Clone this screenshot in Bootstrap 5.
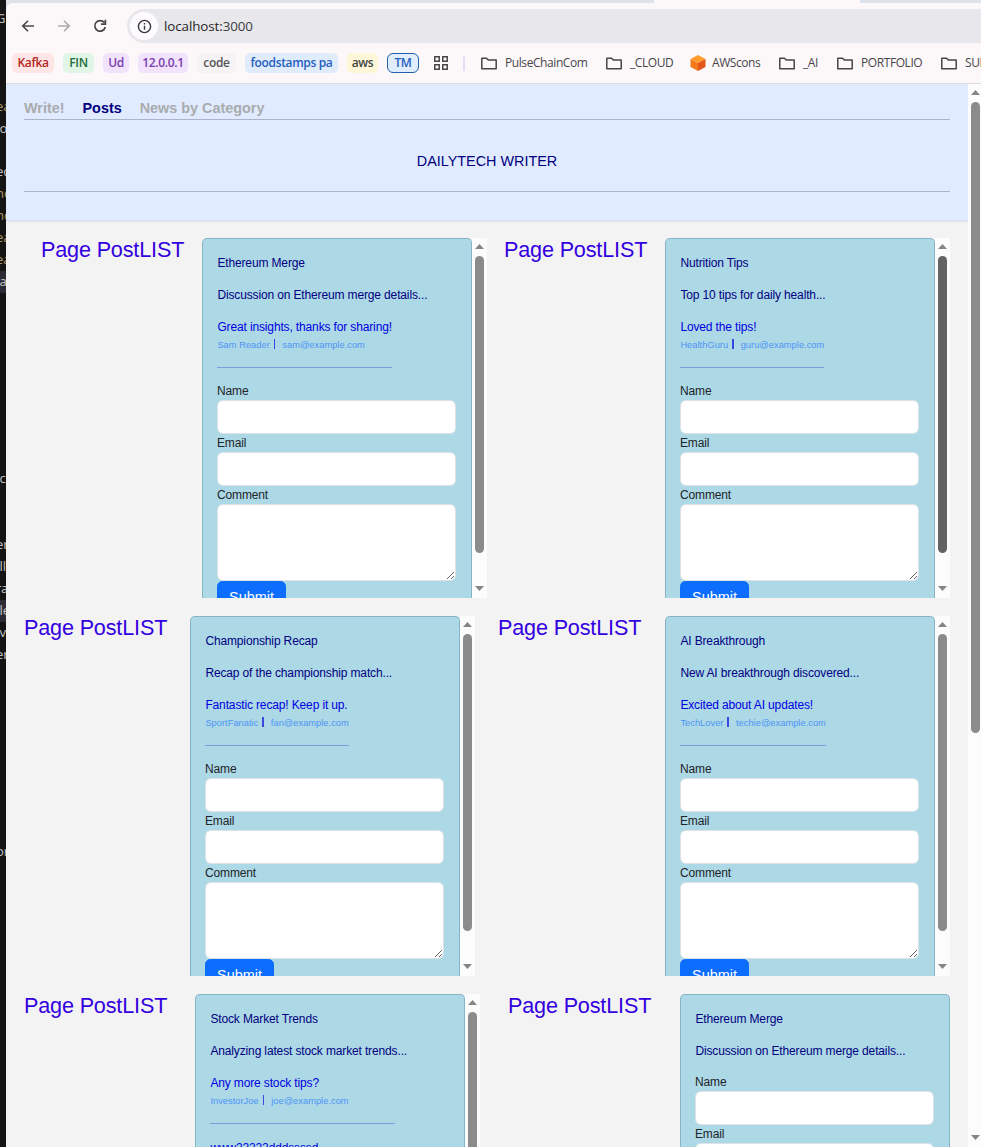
<!DOCTYPE html>
<html lang="en">
<head>
<meta charset="utf-8">
<title>DailyTech Writer</title>
<link href="https://cdn.jsdelivr.net/npm/bootstrap@5.3.0/dist/css/bootstrap.min.css" rel="stylesheet">
<style>
html{font-size:14.4px}
body{font-family:"Liberation Sans",Arial,sans-serif;height:1147px;width:981px;background:#141414}
.editor{width:6px;height:1147px;background:#141414;font:13px/21.93px "Noto Sans",sans-serif;color:#bdbdbd;padding-top:8px;white-space:nowrap}
.editor div{height:21.93px;overflow:hidden;text-indent:-4px}
.editor .gold{color:#a8935f}
.editor .hl{background:#2c2a35}
.editor .full{text-indent:-.5px}
.window{background:#dee2ea;width:975px}
.tabgap{height:3px;margin-left:648px;width:206px;background:#fcf8f9}
.chrome{height:81px;background:#fcf8f9;border-bottom:1px solid #dcdadf;border-top-left-radius:7px;font-family:"Open Sans","Noto Sans",sans-serif;color:#46464a}
.chrome svg{flex:none}
.toolbar{height:46px;padding-left:14px}
.toolbar>svg{margin-right:20px}
.address{height:34px;margin-left:-1px;border-radius:17px 0 0 17px;background:#e8e7ec;font-size:13.4px;color:#3c3c40;letter-spacing:-.1px}
.address b{font-weight:400;color:#1f1f22}
.info{width:28px;height:28px;margin-left:3px;margin-right:6px;background:#fdfbfd}
.marks{font-size:12px;height:28px;white-space:nowrap;padding-left:6px}
.chips{display:grid;grid-template-columns:42px 31px 26px 50px 39px 93px 31px 32px;column-gap:9px;flex:none}
.chip{height:20px;line-height:19px;border-radius:5px;text-align:center;font-weight:600;letter-spacing:-.35px}
.c-red{background:#fde6e5;color:#b3261e}.c-green{background:#e0f5e5;color:#1c6b3a}
.c-purple{background:#f1e3fb;color:#7a3cb0}.c-gray{background:#f5f3f5;color:#555}
.c-blue{background:#e0ebfb;color:#2560c0}.c-yellow{background:#fdf7d8;color:#444}
.c-line{background:#e0edfd;color:#2560c0;border:1px solid #2460a8;line-height:17px;border-radius:6px}
.apps{margin-left:15px}
.folders{display:grid;grid-template-columns:125px 84px 89px 58px 104px 60px;margin-left:16px;letter-spacing:-.42px;flex:none}
.folders svg{margin-right:8px}
.folders .cube{margin-right:6px}
.divide{width:2px;height:15px;background:#dfe0f2;margin-left:15px;flex:none}
.viewport{height:1063px;background:#f3f3f3}
.bar{background:#fcfcfc;padding:6px 3px;flex:none}
.bar .up,.bar .down{width:9px;height:5px;background:#858585;flex:none}
.up{clip-path:polygon(50% 0,100% 100%,0 100%)}
.down{clip-path:polygon(0 0,100% 0,50% 100%)}
.thumb{width:9px;border-radius:5px;background:#8b8b8b;margin-top:7px}
.side{width:15px;height:360px;padding-bottom:7px}
.side .thumb{height:297px}
.side.dark .thumb{background:#636363}
.side.long .thumb{height:315px}
.page-bar{width:13px;padding-left:3px;padding-right:1px;padding-bottom:7px}
.page-bar .thumb{height:631px}
.masthead{height:137px;background:#e0ebff;border-bottom:1px solid #d8e0ec;padding:15px 18px 0;box-shadow:0 1px 2px #0001}
.tabs{height:21px;border-bottom:1px solid #a9b4cb;line-height:18px;font-weight:700;color:#a9abae;gap:18px}
.tabs .now{color:#000080}
.brand{height:72px;border-bottom:1px solid #a9b4cb;line-height:83px;color:#000080}
.posts{padding:17px 0 0 18px}
.line{display:grid;height:360px;margin-bottom:18px}
.r1{padding-left:17px;grid-template-columns:161px 302px 161px 285px}
.r2{grid-template-columns:166px 308px 167px 285px}
.r3{grid-template-columns:171px 313px 172px 285px}
.heading{font-size:21.6px;line-height:24px;font-weight:400;color:#3300e0;margin:0;letter-spacing:-.16px;white-space:nowrap}
.post{width:270px;height:360px;background:#add8e6;border:1px solid #86b4c6;border-bottom:0;border-radius:5px 5px 0 0;padding:16px 14.4px 0;overflow:hidden;font-size:12px;letter-spacing:-.14px;flex:none}
.post p{margin:0 0 15px;line-height:17px;color:#000080}
.note{width:fit-content;border-bottom:1px solid #7a9fdc;height:49px;margin-bottom:16px;color:#0000e0;line-height:17px}
.note.wide{width:185px}
.by{font-size:9.3px;line-height:18px;height:18px;color:#4d94f5;white-space:nowrap;letter-spacing:.02px}
.by i{display:inline-block;width:1.5px;height:10px;background:#3c46e0;margin:0 7px 0 4px;vertical-align:-1px}
.post form{margin:-2px .4px 0 -.4px}
.post label{display:block;height:18px;line-height:19px;color:#212529}
.post .form-control{height:34px;border-radius:5.4px}
.post textarea.form-control{height:77px;min-height:0}
.post .btn{display:block;font-size:14.4px;height:34px;border-radius:5.4px;width:69px;padding-left:0;padding-right:0}
</style>
</head>
<body class="d-flex overflow-hidden">
<div class="editor overflow-hidden flex-shrink-0" id="editor"></div>
<div class="window flex-shrink-0">
  <div class="tabgap"></div>
  <div class="chrome overflow-hidden">
    <div class="toolbar d-flex align-items-center">
      <svg width="16" height="16" viewBox="0 0 16 16" fill="none" stroke="#47474a" stroke-width="1.6"><path d="M14 8H3M8 2.7 2.7 8 8 13.3"/></svg>
      <svg width="16" height="16" viewBox="0 0 16 16" fill="none" stroke="#aaa8ab" stroke-width="1.6"><path d="M2 8h11M8 2.7 13.3 8 8 13.3"/></svg>
      <svg width="16" height="16" viewBox="0 0 16 16" fill="none" stroke="#47474a" stroke-width="1.7"><path d="M12.3 4.600A5.300 5.300 0 1 0 13.300 9M13.400 1.800v4.300H9"/></svg>
      <div class="address d-flex align-items-center flex-grow-1">
        <span class="info rounded-circle d-flex align-items-center justify-content-center"><svg width="15" height="15" viewBox="0 0 15 15" fill="none" stroke="#36363a" stroke-width="1.4"><circle cx="7.5" cy="7.5" r="6.1"/><path d="M7.5 6.8v4M7.5 4v1.4"/></svg></span>
        <span><b>localhost:</b>3000</span>
      </div>
    </div>
    <div class="marks d-flex align-items-center">
      <div class="chips">
        <span class="chip c-red">Kafka</span><span class="chip c-green">FIN</span><span class="chip c-purple">Ud</span><span class="chip c-purple">12.0.0.1</span><span class="chip c-gray">code</span><span class="chip c-blue">foodstamps pa</span><span class="chip c-yellow">aws</span><span class="chip c-line">TM</span>
      </div>
      <svg class="apps" width="14" height="14" viewBox="0 0 14 14" fill="none" stroke="#454547" stroke-width="1.5"><path d="M.8.8h4.4v4.4H.8zM8.800.8h4.400v4.400H8.800zM.8 8.800h4.400v4.400H.8zM8.800 8.800h4.400v4.400H8.800z"/></svg>
      <span class="divide"></span>
      <div class="folders" id="folders"></div>
    </div>
  </div>
  <div class="viewport d-flex overflow-hidden">
    <main class="flex-grow-1">
      <header class="masthead">
        <nav class="tabs d-flex"><span>Write!</span><span class="now">Posts</span><span>News by Category</span></nav>
        <div class="brand text-center">DAILYTECH WRITER</div>
      </header>
      <section class="posts" id="posts"></section>
    </main>
    <div class="bar page-bar d-flex flex-column"><span class="up"></span><span class="thumb"></span><span class="down mt-auto"></span></div>
  </div>
</div>
<script src="https://cdn.jsdelivr.net/npm/bootstrap@5.3.0/dist/js/bootstrap.bundle.min.js"></script>
<script>
// visible slice of the code editor behind the browser window
const code = {0:['G'],4:['ea','gold'],5:['o','full'],7:['ed'],8:['nc','gold'],9:['nc','gold'],10:['ea','gold'],11:['ea','gold'],12:['a','hl full'],21:['c','full'],24:['er'],25:['ll','full'],26:['ra'],27:['le','hl full'],28:['v','full'],29:['er'],38:['or']};
document.getElementById('editor').innerHTML = Array.from({length:52},(_,i)=>{const c=code[i]||[''];return `<div class="${c[1]||''}">${c[0]}</div>`}).join('');

const folder = '<svg width="16" height="13" viewBox="0 0 16 13" fill="none" stroke="#454547" stroke-width="1.5" stroke-linejoin="round"><path d="M.8 1.2h4.7l1.8 1.9h7.9v8.7H.8z"/></svg>';
const cube = '<svg class="cube" width="16" height="16" viewBox="0 0 16 16"><path fill="#ff9c2b" d="M8 0 15.5 4 8 8 .5 4z"/><path fill="#f47a1c" d="M.5 4 8 8v8L.5 12z"/><path fill="#e4561a" d="M15.5 4 8 8v8l7.5-4z"/></svg>';
document.getElementById('folders').innerHTML = ['PulseChainCom','_CLOUD','AWScons','_AI','PORTFOLIO','SUI'].map(n=>`<span class="d-flex align-items-center">${n==='AWScons'?cube:folder}${n}</span>`).join('');

const rows = [
 [['Ethereum Merge','Discussion on Ethereum merge details...','Great insights, thanks for sharing!','Sam Reader','sam@example.com',''],
  ['Nutrition Tips','Top 10 tips for daily health...','Loved the tips!','HealthGuru','guru@example.com','dark']],
 [['Championship Recap','Recap of the championship match...','Fantastic recap! Keep it up.','SportFanatic','fan@example.com',''],
  ['AI Breakthrough','New AI breakthrough discovered...','Excited about AI updates!','TechLover','techie@example.com','']],
 [['Stock Market Trends','Analyzing latest stock market trends...','Any more stock tips?','InvestorJoe','joe@example.com','long','www22222dddssssd'],
  ['Ethereum Merge','Discussion on Ethereum merge details...']]
];
const form = '<form><label>Name</label><input class="form-control"><label>Email</label><input class="form-control"><label>Comment</label><textarea class="form-control"></textarea><button type="button" class="btn btn-primary">Submit</button></form>';
const post = ([title,text,note,who,mail,bar,extra]) => `<h2 class="heading">Page PostLIST</h2><div class="d-flex"><article class="post"><p>${title}</p><p>${text}</p>${note?`<div class="note ${extra?'wide':''}">${note}<div class="by">${who}<i></i>${mail}</div></div>`:''}${extra?`<div class="note">${extra}</div>`:''}${form}</article>${note?`<div class="bar side d-flex flex-column ${bar}"><span class="up"></span><span class="thumb"></span><span class="down mt-auto"></span></div>`:''}</div>`;
document.getElementById('posts').innerHTML = rows.map((r,i)=>`<div class="line r${i+1}">${r.map(post).join('')}</div>`).join('');
</script>
</body>
</html>
